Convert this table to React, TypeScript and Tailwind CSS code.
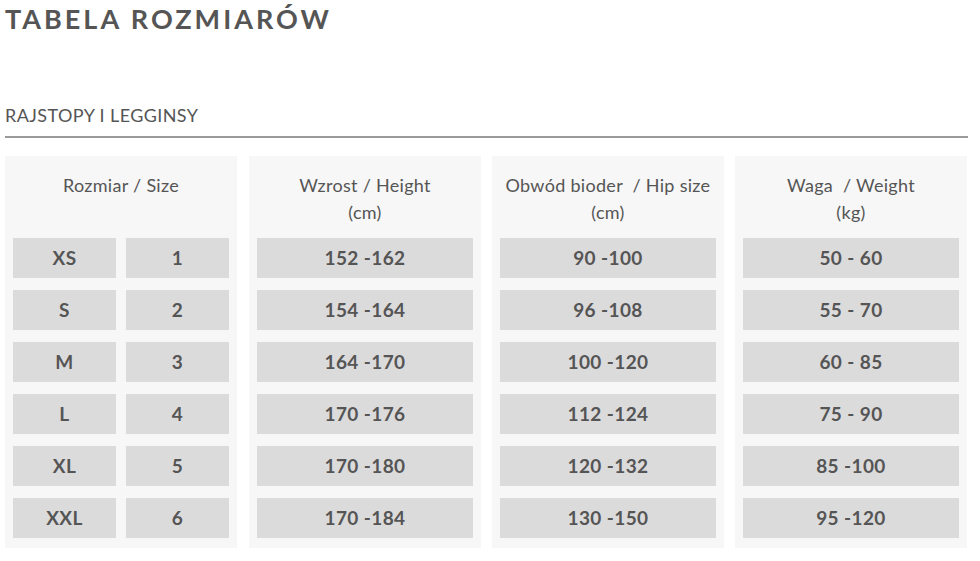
import React from "react";

const sizes = [
  ["XS", "1"],
  ["S", "2"],
  ["M", "3"],
  ["L", "4"],
  ["XL", "5"],
  ["XXL", "6"],
];

const cols = [
  {
    h1: "Wzrost / Height",
    h2: "(cm)",
    vals: ["152 -162", "154 -164", "164 -170", "170 -176", "170 -180", "170 -184"],
  },
  {
    h1: "Obwód bioder  / Hip size",
    h2: "(cm)",
    vals: ["90 -100", "96 -108", "100 -120", "112 -124", "120 -132", "130 -150"],
  },
  {
    h1: "Waga  / Weight",
    h2: "(kg)",
    vals: ["50 - 60", "55 - 70", "60 - 85", "75 - 90", "85 -100", "95 -120"],
  },
];

const cell =
  "h-[40px] bg-[#dcdbdc] flex items-center justify-center text-[19px] font-bold tracking-[0.4px] text-[#555555]";

export default function App() {
  return (
    <div
      className="w-[980px] h-[561px] bg-white text-[#555555] overflow-hidden"
      style={{ fontFamily: "Lato, 'Open Sans', sans-serif" }}
    >
      <div className="px-[5px]">
        <h1 className="pt-[3px] text-[27px] leading-[32px] font-bold tracking-[3px] text-[#555555]">
          TABELA ROZMIARÓW
        </h1>
        <div className="mt-[69px] text-[18px] leading-[22px] tracking-[0.4px] text-[#555555]">
          RAJSTOPY I LEGGINSY
        </div>
        <div className="mt-[10px] h-[2px] w-[963px] bg-[#9a9a9a]" />
        <div className="mt-[18px] flex gap-[11px]">
          <div className="mr-[1px] w-[232px] bg-[#f7f7f7] px-[8px] pt-[16px] pb-[10px]">
            <div className="h-[54px] text-center text-[18px] leading-[27px] tracking-[0.3px] whitespace-pre">
              Rozmiar / Size
            </div>
            <div className="mt-[12px] flex flex-col gap-[12px]">
              {sizes.map(([a, b]) => (
                <div key={a} className="grid grid-cols-2 gap-[10px]">
                  <div className={cell}>{a}</div>
                  <div className={cell}>{b}</div>
                </div>
              ))}
            </div>
          </div>
          {cols.map((c) => (
            <div
              key={c.h1}
              className="w-[232px] bg-[#f7f7f7] px-[8px] pt-[16px] pb-[10px]"
            >
              <div className="h-[54px] text-center text-[18px] leading-[27px] tracking-[0.3px] whitespace-pre">
                <div>{c.h1}</div>
                <div>{c.h2}</div>
              </div>
              <div className="mt-[12px] flex flex-col gap-[12px]">
                {c.vals.map((v) => (
                  <div key={v} className={cell + " whitespace-pre"}>
                    {v}
                  </div>
                ))}
              </div>
            </div>
          ))}
        </div>
      </div>
    </div>
  );
}
